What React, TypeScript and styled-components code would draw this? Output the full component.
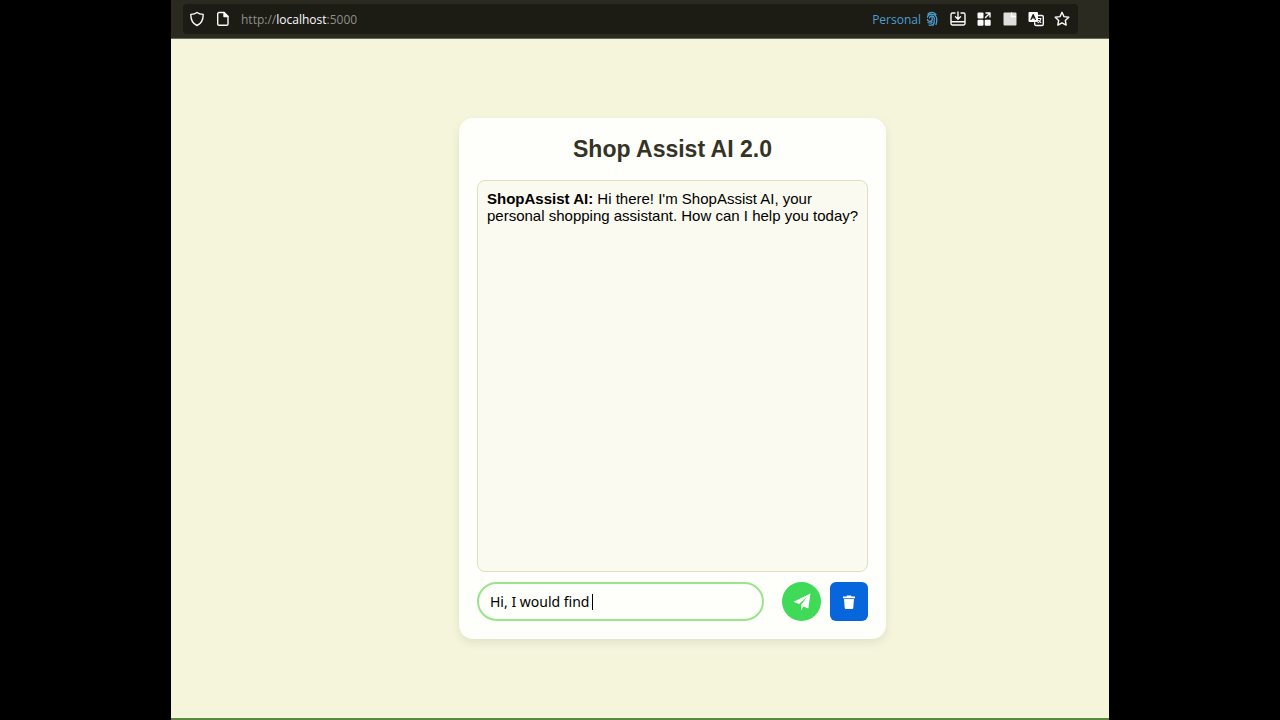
import React, { useState } from "react";
import styled, { createGlobalStyle } from "styled-components";

const GlobalStyle = createGlobalStyle`
  * { box-sizing: border-box; }
  body { margin: 0; background: #000; font-family: Arial, "Liberation Sans", sans-serif; }
`;

const Screen = styled.div`
  display: flex;
  flex-direction: column;
  min-height: 100vh;
  margin: 0 171px;
  background: #f5f5dc;
  border-bottom: 2px solid #5a8a3c;
`;

const BrowserBar = styled.header`
  display: flex;
  padding: 4px 31px 4px 12px;
  background: #2b2a20;
  border-bottom: 1px solid #68675a;
`;

const AddressBar = styled.div`
  display: flex;
  flex: 1;
  align-items: center;
  gap: 10px;
  height: 30px;
  padding: 0 8px 0 6px;
  border-radius: 4px;
  background: #1c1b14;
  color: #fbfbfe;
`;

const Address = styled.div`
  flex: 1;
  padding-top: 2px;
  font: 12px/18px "Open Sans", "Noto Sans", sans-serif;
  color: #8f8f88;
  b { font-weight: 400; color: #fbfbfe; }
`;

const Container = styled.div`
  display: flex;
  align-items: center;
  gap: 3px;
  padding-top: 2px;
  font: 12px/18px "Open Sans", "Noto Sans", sans-serif;
  color: #4a9fd0;
  svg { margin-top: -2px; }
`;

const Tools = styled.div`
  display: flex;
  gap: 10px;
`;

const ToolButton = styled.button`
  display: flex;
  padding: 0;
  border: 0;
  background: none;
  color: inherit;
`;

const Main = styled.main`
  display: flex;
  flex: 1;
  align-items: center;
  justify-content: center;
  padding-left: 65px;
`;

const Card = styled.section`
  width: 427px;
  padding: 18px;
  border-radius: 14px;
  background: #fefefa;
  box-shadow: 0 4px 10px rgba(0, 0, 0, 0.08);
`;

const Title = styled.h1`
  margin: 0 0 18px;
  font-size: 23px;
  line-height: 26px;
  text-align: center;
  color: #333326;
`;

const ChatBox = styled.div`
  height: 392px;
  margin-bottom: 10px;
  padding: 9px 2px 9px 9px;
  border: 1px solid #dedec4;
  border-radius: 8px;
  background: #fafaf0;
`;

const Message = styled.p`
  margin: 0;
  font-size: 15px;
  line-height: 17px;
  color: #000;
`;

const Form = styled.form`
  display: flex;
  align-items: stretch;
  height: 39px;
`;

const Field = styled.label`
  position: relative;
  flex: 1;
  margin-right: 18px;
`;

const TextInput = styled.input`
  width: 100%;
  height: 100%;
  padding: 0 11px;
  border: 2px solid #98e58c;
  border-radius: 20px;
  outline: none;
  background: #fefefa;
  font: 14px "Noto Sans", sans-serif;
  color: #000;
`;

const Caret = styled.span`
  position: absolute;
  top: 12px;
  left: 115px;
  width: 1px;
  height: 16px;
  background: #000;
`;

const ActionButton = styled.button<{ $color: string; $round?: boolean }>`
  display: flex;
  align-items: center;
  justify-content: center;
  width: ${(p) => (p.$round ? 39 : 38)}px;
  margin-right: ${(p) => (p.$round ? 9 : 0)}px;
  padding: 0;
  border: 0;
  border-radius: ${(p) => (p.$round ? "50%" : "6px")};
  background: ${(p) => p.$color};
  color: #fff;
`;

const Icon = ({ children }: { children: React.ReactNode }) => (
  <svg width="16" height="16" viewBox="0 0 16 16" fill="none" stroke="currentColor" strokeWidth="1.4" strokeLinecap="round" strokeLinejoin="round" aria-hidden="true">
    {children}
  </svg>
);

export default function App() {
  const [text, setText] = useState("Hi, I would find ");
  return (
    <>
      <GlobalStyle />
      <Screen>
        <BrowserBar>
          <AddressBar>
            <ToolButton aria-label="Tracking protection">
              <Icon><path d="M8 1.500C6.300 2.800 4 3.300 1.800 3.400c0 5.300 2.200 9.300 6.200 11.100 4-1.800 6.200-5.800 6.200-11.100C12 3.300 9.700 2.800 8 1.500z" /></Icon>
            </ToolButton>
            <ToolButton aria-label="Site information">
              <Icon><path d="M4 1.500h5l4 4V13a1.300 1.300 0 0 1-1.300 1.300H4A1.300 1.300 0 0 1 2.700 13V2.800A1.300 1.300 0 0 1 4 1.500z" /><path d="M9 1.500v4h4z" fill="currentColor" /></Icon>
            </ToolButton>
            <Address>http://<b>localhost</b>:5000</Address>
            <Container>
              Personal
              <Icon>
                <path strokeWidth="1.300" d="M4 3c2-2.400 6-2.200 8 .5M3.500 6c.5-3.500 6.500-4 8.500-.5 1 2 1 5 0 8M5.500 7c.5-3 4.500-2.500 4.800.5.200 2.500 0 5-1.300 7M3.500 8.500c0 2 2.500 2 4.500 1.500M8 6.500c.5 2 .3 3-.5 3M4 11.500c1.500.8 3 .7 4 .2M5 14c1 .5 2 .3 3-.3" />
              </Icon>
            </Container>
            <Tools>
              <ToolButton aria-label="Install"><Icon><path d="M5 2H2.500A1.500 1.500 0 0 0 1 3.500v9A1.500 1.500 0 0 0 2.500 14h11a1.500 1.500 0 0 0 1.500-1.500v-9A1.500 1.500 0 0 0 13.500 2H11M1 10.700h14M8 1v7M5.500 5.700 8 8.200l2.500-2.500" /></Icon></ToolButton>
              <ToolButton aria-label="Extensions">
                <Icon><g fill="currentColor" stroke="none"><rect x="1.500" y="1.500" width="6" height="6" rx="1" /><rect x="1.500" y="8.700" width="6" height="6" rx="1" /><rect x="8.700" y="8.700" width="6" height="6" rx="1" /></g><path d="m9.500 6.500 4-4M10 2h4v4" /></Icon>
              </ToolButton>
              <ToolButton aria-label="Page note"><Icon><rect x="1.500" y="1.500" width="13" height="13" rx="1" fill="#dededc" stroke="none" /><path d="M9.500 2v3.500h4" stroke="#fff" /></Icon></ToolButton>
              <ToolButton aria-label="Translate page">
                <Icon><rect x="0.500" y="1" width="9.500" height="10" rx="1" fill="currentColor" stroke="none" /><path d="m3 8.500 2.200-5 2.200 5M4 6.800h2.500" stroke="#1c1b14" strokeWidth="1.200" /><path d="M10.500 4.500H14a1.300 1.300 0 0 1 1.300 1.300v7.400a1.300 1.300 0 0 1-1.300 1.300H8A1.300 1.300 0 0 1 6.700 13.200v-1.500" /><path d="M9.500 7.500h3.500c-.4 2-1.500 3.400-3 4.200M10.500 9.500l2.300 2" strokeWidth="1.100" /></Icon>
              </ToolButton>
              <ToolButton aria-label="Bookmark"><Icon><path d="m8 1.300 2 4.300 4.800.6-3.500 3.200.9 4.700L8 11.800l-4.200 2.300.9-4.700L1.200 6.200 6 5.600z" /></Icon></ToolButton>
            </Tools>
          </AddressBar>
        </BrowserBar>
        <Main>
          <Card>
            <Title>Shop Assist AI 2.0</Title>
            <ChatBox>
              <Message><strong>ShopAssist AI:</strong> Hi there! I'm ShopAssist AI, your personal shopping assistant. How can I help you today?</Message>
            </ChatBox>
            <Form onSubmit={(e) => e.preventDefault()}>
              <Field>
                <TextInput aria-label="Message" value={text} onChange={(e) => setText(e.target.value)} />
                <Caret />
              </Field>
              <ActionButton $color="#3fda58" $round type="submit" aria-label="Send">
                <svg width="18" height="18" viewBox="0 0 18 18" fill="currentColor" aria-hidden="true"><path d="M17.500.5 15.300 15.500l-4.800-2L8 17.500V12l6-8-8 7-5.500-2.300z" /></svg>
              </ActionButton>
              <ActionButton $color="#0866dc" type="button" aria-label="Clear conversation">
                <svg width="12" height="14" viewBox="0 0 12 14" fill="currentColor" aria-hidden="true"><path d="M4 .5h4l.6 1H12v1.700H0V1.500h3.400zM1 4h10l-.7 8.700A1.300 1.300 0 0 1 9 14H3a1.300 1.300 0 0 1-1.300-1.300z" /></svg>
              </ActionButton>
            </Form>
          </Card>
        </Main>
      </Screen>
    </>
  );
}
